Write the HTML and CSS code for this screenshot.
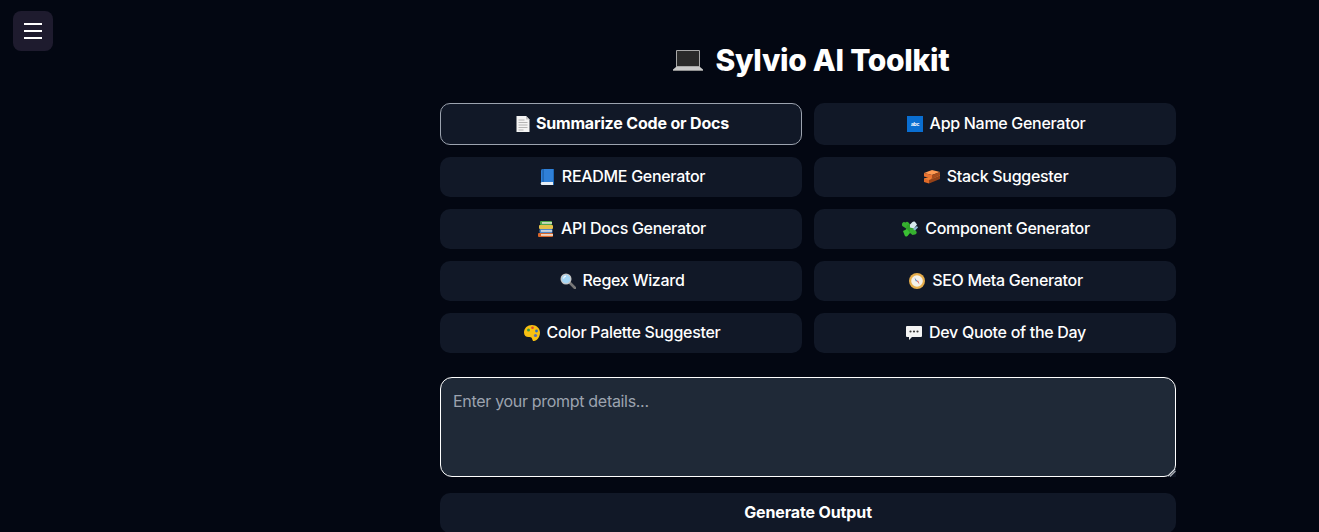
FILE: index.html
```html
<!DOCTYPE html>
<html lang="en">
<head>
<meta charset="utf-8">
<title>Sylvio AI Toolkit</title>
<link rel="stylesheet" href="styles.css">
</head>
<body>
<button class="menu" aria-label="Open menu"><span></span><span></span><span></span></button>
<main class="main">
<h1 class="title">
<svg class="laptop" viewBox="0 0 30 21" aria-hidden="true"><path d="M4 0h22a1 1 0 0 1 1 1v16H3V1a1 1 0 0 1 1-1z" fill="#a8a8a8"/><rect x="4" y="1" width="22" height="15" fill="#2a2a2a"/><path d="M3 17h24l3 2.600V21H0v-1.400z" fill="#c9c9c9"/><rect x="0" y="20" width="30" height="1" fill="#8f8f8f"/></svg>
<span>Sylvio AI Toolkit</span>
</h1>
<div class="tools">
<button class="tool active"><svg class="ico" viewBox="0 0 16 16" aria-hidden="true"><path d="M1.500 0H11l3.500 3.500V16h-13z" fill="#f4f4f4"/><path d="M11 0v3.500h3.500z" fill="#c4c4c4"/><path d="M3.500 4h6M3.500 6.500h9M3.500 9h9M3.500 11.500h9M3.500 14h5" stroke="#a3a3a3" stroke-width=".8"/></svg><span>Summarize Code or Docs</span></button>
<button class="tool"><svg class="ico" viewBox="0 0 16 16" aria-hidden="true"><rect width="16" height="16" fill="#0a6ed1"/><text x="8" y="10" text-anchor="middle" class="abc">abc</text></svg><span>App Name Generator</span></button>
<button class="tool"><svg class="ico" viewBox="0 0 16 16" aria-hidden="true"><path d="M2 1.500A1.500 1.500 0 0 1 3.500 0H15v16H3.500A1.500 1.500 0 0 1 2 14.500z" fill="#2f80d8"/><path d="M3 13h12v3H3.500A1.500 1.500 0 0 1 3 13z" fill="#e8eef5"/><rect x="3.500" y="0" width="1.200" height="13" fill="#1a5ea8"/><rect x="14" y="0" width="1" height="16" fill="#1d67b5"/></svg><span>README Generator</span></button>
<button class="tool"><svg class="ico" viewBox="0 0 16 16" aria-hidden="true"><path d="M0 4 8 1l8 2-8 3z" fill="#ff9a52"/><path d="M0 4l8 2v3.500L0 7.500z" fill="#ea7230"/><path d="M8 6l8-3v3l-8 3.500z" fill="#a94c1b"/><path d="M0 9.500 5 8l3 1.500 8-3.500v3L5 13 0 11.500z" fill="#f08034"/><path d="M0 9.500 5 11v3.500L0 13z" fill="#e06a28"/><path d="M5 11l11-4.500V10L5 14.500z" fill="#954218"/></svg><span>Stack Suggester</span></button>
<button class="tool"><svg class="ico" viewBox="0 0 16 16" aria-hidden="true"><rect x="2" y="0" width="12" height="4" rx="1" fill="#4ea84a"/><rect x="4" y="1.200" width="10" height="1.500" fill="#e6e6d8"/><rect x="1" y="4" width="14" height="4" rx="1" fill="#e4c14a"/><rect x="1.500" y="8" width="13" height="4" rx="1" fill="#4f86c6"/><rect x="3" y="9.200" width="11" height="1.500" fill="#e6e6e6"/><rect x="0" y="12" width="15" height="4" rx="1" fill="#d8662b"/><rect x="3" y="13.200" width="12" height="1.500" fill="#f3f0e8"/></svg><span>API Docs Generator</span></button>
<button class="tool"><svg class="ico" viewBox="0 0 16 16" aria-hidden="true"><path d="M3.500 1.500a2 2 0 0 1 3 0L8 3.500 5 8 1 5.500a2 2 0 0 1 2.500-4z" fill="#36b02f"/><path d="M5 4 8 3.500 12 8l-4 4-4.500-.5L4 8z" fill="#2fa02a"/><path d="M8 8l4-.5 2 2.500a2 2 0 0 1-1 3.500l-2.500.5L8 12z" fill="#36b02f"/><path d="M1 10l4-2 3 4-2.500 3a2 2 0 0 1-3-1z" fill="#3abf33"/><path d="M8 3.500l2.500-2.500a1.800 1.800 0 0 1 3 .5l1.500 2-3 4-4-1z" fill="#d7e9ee"/><path d="M11 8l4-3 1 1.500-3 3z" fill="#8fb9d6"/></svg><span>Component Generator</span></button>
<button class="tool"><svg class="ico" viewBox="0 0 16 16" aria-hidden="true"><path d="M9.500 9.500 15 15" stroke="#777" stroke-width="2.600" stroke-linecap="round"/><circle cx="6" cy="6" r="5.500" fill="#c7c7c7"/><circle cx="6" cy="6" r="4.300" fill="#a6d6f5"/><path d="M3.500 5.500A3 3 0 0 1 6 3" stroke="#fff" stroke-width="1.100" fill="none"/></svg><span>Regex Wizard</span></button>
<button class="tool"><svg class="ico" viewBox="0 0 16 16" aria-hidden="true"><circle cx="8" cy="8" r="8" fill="#e6ad4b"/><circle cx="8" cy="8" r="5.800" fill="#f4f1ea"/><path d="M5.500 4.500 8 8l-1 .6z" fill="#2d5fa8"/><path d="M10.500 11.500 8 8l1-.6z" fill="#d83a32"/></svg><span>SEO Meta Generator</span></button>
<button class="tool"><svg class="ico" viewBox="0 0 16 16" aria-hidden="true"><path d="M8 0c4.500 0 8 3.200 8 7.500 0 4.800-3.200 8.500-6 8.500-1.500 0-1.500-1.300-2-2.600-.7-1.500-2-1.200-3.500-1.300C2 12 0 10.500 0 7.500 0 3 3.500 0 8 0z" fill="#f8c012"/><circle cx="4.500" cy="5" r="1.500" fill="#3d9b3d"/><circle cx="8.500" cy="2.800" r="1.300" fill="#e0482f"/><circle cx="12.500" cy="6" r="1.400" fill="#2d6fc2"/><circle cx="11.500" cy="10.500" r="1.600" fill="#5b6fb5"/></svg><span>Color Palette Suggester</span></button>
<button class="tool"><svg class="ico" viewBox="0 0 16 16" aria-hidden="true"><path d="M1 1h14a1 1 0 0 1 1 1v9a1 1 0 0 1-1 1H6l-3 3v-3H1a1 1 0 0 1-1-1V2a1 1 0 0 1 1-1z" fill="#f4f4f4"/><circle cx="4.500" cy="6.500" r="1.100" fill="#3a3a3a"/><circle cx="8" cy="6.500" r="1.100" fill="#3a3a3a"/><circle cx="11.500" cy="6.500" r="1.100" fill="#3a3a3a"/></svg><span>Dev Quote of the Day</span></button>
</div>
<div class="prompt-wrap">
<textarea class="prompt" placeholder="Enter your prompt details..."></textarea>
<svg class="grip" viewBox="0 0 9 9" aria-hidden="true"><path d="M0 9 9 0v9z" fill="#0b1220"/><path d="M1 8 8 1" stroke="#d8dbe0" stroke-width="1.300"/><path d="M3 8.500 8.500 3" stroke="#aeb3ba" stroke-width="1.100"/></svg>
</div>
<button class="generate">Generate Output</button>
</main>
</body>
</html>
```
FILE: styles.css
```css
* { box-sizing: border-box; }
html, body { height: 100%; }
body {
  margin: 0;
  background: #030712;
  color: #fff;
  font-family: Inter, "Liberation Sans", sans-serif;
  overflow: hidden;
}
.menu {
  position: fixed;
  top: 11px;
  left: 13px;
  width: 40px;
  height: 40px;
  border: 0;
  border-radius: 8px;
  background: #1e1b2e;
  display: flex;
  flex-direction: column;
  align-items: center;
  justify-content: center;
  gap: 5px;
  padding: 0;
}
.menu span { display: block; width: 18px; height: 2px; background: #fff; }
.main { width: 736px; margin-left: 440px; padding-top: 41px; }
.title {
  display: flex;
  align-items: center;
  justify-content: center;
  margin: 0 0 23px;
  font-size: 30px;
  line-height: 39px;
  font-weight: 800;
  letter-spacing: -0.3px;
}
.laptop { width: 30px; height: 21px; margin: 0 13px 0 6px; }
.tools { display: grid; grid-template-columns: 1fr 1fr; gap: 12px; }
.tool {
  display: flex;
  align-items: center;
  justify-content: center;
  min-height: 40px;
  padding: 0 0 2px;
  border: 0;
  border-radius: 10px;
  background: #111827;
  color: #fff;
  font: 450 16px/24px Inter, "Liberation Sans", sans-serif;
  letter-spacing: -0.3px;
}
.ico { width: 16px; height: 16px; margin: 1px 7px 0 2px; flex: none; }
.abc { font: 700 5px Inter, "Liberation Sans", sans-serif; fill: #fff; }
.tool.active { min-height: 42px; border: 1px solid #9ca3af; font-weight: 700; letter-spacing: -0.17px; }
.tool.active .ico { margin-right: 5px; }
.prompt-wrap { position: relative; margin-top: 24px; }
.prompt {
  display: block;
  width: 100%;
  height: 100px;
  padding: 11px 12px 13px;
  border: 1px solid #fff;
  border-radius: 12px;
  background: #1f2937;
  color: #fff;
  font: 400 16px/24px Inter, "Liberation Sans", sans-serif;
  letter-spacing: -0.31px;
  outline: 0;
  resize: none;
}
.prompt::placeholder { color: #9ca3af; }
.grip { position: absolute; right: 0; bottom: 0; width: 9px; height: 9px; }
.generate {
  display: block;
  width: 100%;
  height: 40px;
  margin-top: 16px;
  padding: 0 0 2px;
  border: 0;
  border-radius: 10px;
  background: #111827;
  color: #fff;
  font: 700 16px/24px Inter, "Liberation Sans", sans-serif;
  letter-spacing: -0.13px;
}
```
